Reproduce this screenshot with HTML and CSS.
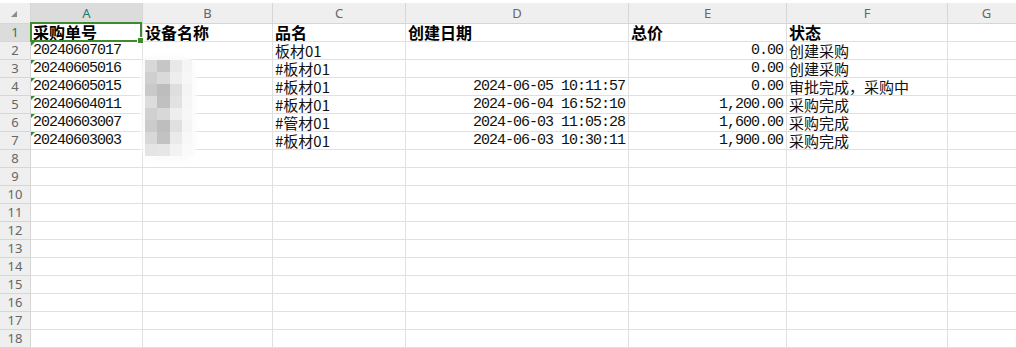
FILE: index.html
```html
<!DOCTYPE html>
<html lang="zh-CN">
<head>
    <meta charset="UTF-8">
    <title>采购单</title>
    <link rel="stylesheet" href="styles.css">
</head>
<body>
    <div class="sheet">
        <table class="grid">
            <colgroup>
                <col class="c-head">
                <col class="c-a">
                <col class="c-b">
                <col class="c-c">
                <col class="c-d">
                <col class="c-e">
                <col class="c-f">
                <col class="c-g">
            </colgroup>
            <thead>
                <tr>
                    <th class="corner"><span class="corner-mark"></span></th>
                    <th class="active">A</th>
                    <th>B</th>
                    <th>C</th>
                    <th>D</th>
                    <th>E</th>
                    <th>F</th>
                    <th>G</th>
                </tr>
            </thead>
            <tbody>
                <tr class="title">
                    <th class="active">1</th>
                    <td class="selected">采购单号</td>
                    <td>设备名称</td>
                    <td>品名</td>
                    <td>创建日期</td>
                    <td>总价</td>
                    <td>状态</td>
                    <td></td>
                </tr>
                <tr>
                    <th>2</th>
                    <td class="n flag">20240607017</td>
                    <td></td>
                    <td>板材01</td>
                    <td></td>
                    <td class="n r">0.00</td>
                    <td>创建采购</td>
                    <td></td>
                </tr>
                <tr>
                    <th>3</th>
                    <td class="n flag">20240605016</td>
                    <td></td>
                    <td>#板材01</td>
                    <td></td>
                    <td class="n r">0.00</td>
                    <td>创建采购</td>
                    <td></td>
                </tr>
                <tr>
                    <th>4</th>
                    <td class="n flag">20240605015</td>
                    <td></td>
                    <td>#板材01</td>
                    <td class="n r">2024-06-05 10:11:57</td>
                    <td class="n r">0.00</td>
                    <td>审批完成，采购中</td>
                    <td></td>
                </tr>
                <tr>
                    <th>5</th>
                    <td class="n flag">20240604011</td>
                    <td></td>
                    <td>#板材01</td>
                    <td class="n r">2024-06-04 16:52:10</td>
                    <td class="n r">1,200.00</td>
                    <td>采购完成</td>
                    <td></td>
                </tr>
                <tr>
                    <th>6</th>
                    <td class="n flag">20240603007</td>
                    <td></td>
                    <td>#管材01</td>
                    <td class="n r">2024-06-03 11:05:28</td>
                    <td class="n r">1,600.00</td>
                    <td>采购完成</td>
                    <td></td>
                </tr>
                <tr>
                    <th>7</th>
                    <td class="n flag">20240603003</td>
                    <td></td>
                    <td>#板材01</td>
                    <td class="n r">2024-06-03 10:30:11</td>
                    <td class="n r">1,900.00</td>
                    <td>采购完成</td>
                    <td></td>
                </tr>
                <tr><th>8</th><td></td><td></td><td></td><td></td><td></td><td></td><td></td></tr>
                <tr><th>9</th><td></td><td></td><td></td><td></td><td></td><td></td><td></td></tr>
                <tr><th>10</th><td></td><td></td><td></td><td></td><td></td><td></td><td></td></tr>
                <tr><th>11</th><td></td><td></td><td></td><td></td><td></td><td></td><td></td></tr>
                <tr><th>12</th><td></td><td></td><td></td><td></td><td></td><td></td><td></td></tr>
                <tr><th>13</th><td></td><td></td><td></td><td></td><td></td><td></td><td></td></tr>
                <tr><th>14</th><td></td><td></td><td></td><td></td><td></td><td></td><td></td></tr>
                <tr><th>15</th><td></td><td></td><td></td><td></td><td></td><td></td><td></td></tr>
                <tr><th>16</th><td></td><td></td><td></td><td></td><td></td><td></td><td></td></tr>
                <tr><th>17</th><td></td><td></td><td></td><td></td><td></td><td></td><td></td></tr>
                <tr><th>18</th><td></td><td></td><td></td><td></td><td></td><td></td><td></td></tr>
            </tbody>
        </table>

        <!-- pixelated device names -->
        <div class="mosaic">
            <i style="background:#d8d8d8"></i><i style="background:#c6c6c6"></i><i style="background:#e8e8e8"></i><i style="background:#f5f5f5"></i>
            <i style="background:#cfcfcf"></i><i style="background:#dadada"></i><i style="background:#eeeeee"></i><i style="background:#f7f7f7"></i>
            <i style="background:#c9c9c9"></i><i style="background:#bdbdbd"></i><i style="background:#dedede"></i><i style="background:#f4f4f4"></i>
            <i style="background:#dcdcdc"></i><i style="background:#c0c0c0"></i><i style="background:#e2e2e2"></i><i style="background:#f6f6f6"></i>
            <i style="background:#d0d0d0"></i><i style="background:#d8d8d8"></i><i style="background:#eeeeee"></i><i style="background:#f7f7f7"></i>
            <i style="background:#cbcbcb"></i><i style="background:#bebebe"></i><i style="background:#e0e0e0"></i><i style="background:#f5f5f5"></i>
            <i style="background:#d8d8d8"></i><i style="background:#c2c2c2"></i><i style="background:#eaeaea"></i><i style="background:#f8f8f8"></i>
            <i style="background:#e4e4e4"></i><i style="background:#e6e6e6"></i><i style="background:#f2f2f2"></i><i style="background:#fafafa"></i>
        </div>
    </div>
</body>
</html>
```

FILE: styles.css
```css
body {
    margin: 0;
    padding-top: 3px;
    background-color: #fff;
    font-family: 'Noto Sans CJK SC', sans-serif;
    overflow: hidden;
}

.sheet {
    position: relative;
    width: 1016px;
    height: 345px;
    overflow: hidden;
}

.grid {
    border-collapse: separate;
    border-spacing: 0;
    table-layout: fixed;
    width: 1026px;
}

.c-head { width: 31px; }
.c-a { width: 112px; }
.c-b { width: 130px; }
.c-c { width: 133px; }
.c-d { width: 223px; }
.c-e { width: 158px; }
.c-f { width: 161px; }
.c-g { width: 78px; }

.grid th,
.grid td {
    box-sizing: border-box;
    padding: 0;
    white-space: nowrap;
    overflow: hidden;
}

/* column and row headers */
.grid th {
    background-color: #efefef;
    color: #666;
    font-family: 'Noto Sans', sans-serif;
    font-weight: normal;
    font-size: 13px;
    text-align: center;
    border-right: 1px solid #d6d6d6;
    border-bottom: 1px solid #d6d6d6;
}

.grid thead th {
    height: 21px;
    line-height: 20px;
}

.grid th.active {
    background-color: #dcdcdc;
    color: #1b7c6b;
}

.corner {
    vertical-align: middle;
}

.corner-mark {
    display: block;
    width: 0;
    height: 0;
    margin: 1px 0 0 11px;
    border-left: 6px solid transparent;
    border-bottom: 6px solid #8c8c8c;
}

/* cells */
.grid tbody tr {
    height: 18px;
}

.grid td {
    height: 18px;
    max-height: 18px;
    border-right: 1px solid #e0e0e0;
    border-bottom: 1px solid #e0e0e0;
    padding: 0 2px;
    font-size: 15px;
    line-height: 17px;
    color: #111;
    position: relative;
    vertical-align: top;
}

.grid tbody th {
    height: 18px;
    line-height: 17px;
}

.title td {
    font-size: 16px;
    font-weight: bold;
    color: #000;
}

.grid td.n {
    font-family: 'Liberation Mono', monospace;
    font-size: 15px;
    letter-spacing: -1px;
    padding-top: 1px;
    line-height: 16px;
}

.grid td.r {
    text-align: right;
    padding-right: 3px;
}

/* number stored as text */
.flag::before {
    content: "";
    position: absolute;
    left: 0;
    top: 0;
    border-top: 4px solid #2f8f2f;
    border-right: 4px solid transparent;
}

.grid td.selected {
    overflow: visible;
}

.selected::after {
    content: "";
    position: absolute;
    left: -1px;
    top: -2px;
    width: 112px;
    height: 20px;
    box-sizing: border-box;
    border: 2px solid #3e8a2e;
    pointer-events: none;
}

.selected::before {
    content: "";
    position: absolute;
    left: 107px;
    top: 14px;
    width: 5px;
    height: 5px;
    background-color: #3e8a2e;
    outline: 1px solid #fff;
    z-index: 2;
}

.mosaic {
    position: absolute;
    left: 143px;
    top: 54px;
    display: grid;
    grid-template-columns: 12px 13px 12px 10px;
    grid-auto-rows: 12px;
    padding: 3px 2px 4px;
    background-color: #fbfbfb;
    border-radius: 10px 14px 12px 16px;
    box-shadow: 0 0 4px 2px #fcfcfc;
}

.mosaic i {
    display: block;
}
```
